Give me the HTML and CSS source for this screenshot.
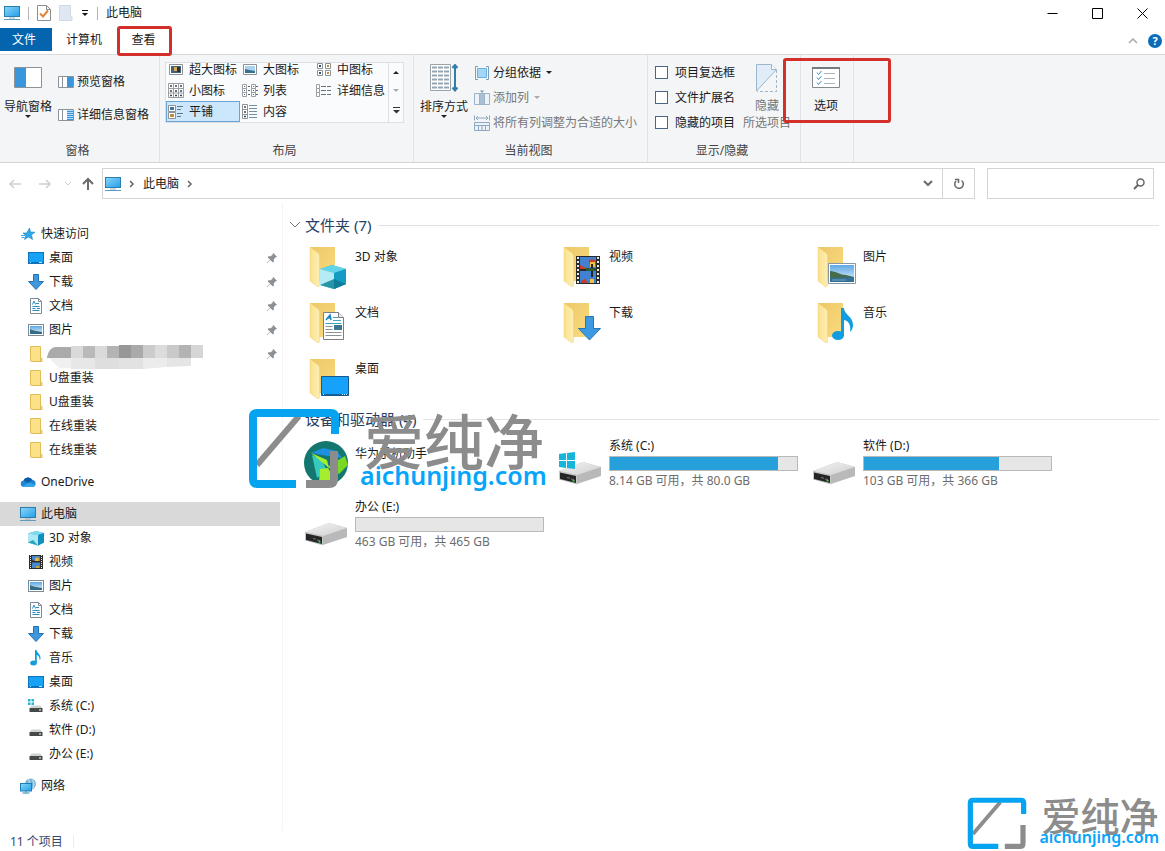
FILE: index.html
```html
<!DOCTYPE html>
<html lang="zh-CN">
<head>
    <meta charset="UTF-8">
    <meta name="viewport" content="width=device-width, initial-scale=1.0">
    <title>此电脑</title>
    <link rel="stylesheet" href="styles.css">
</head>
<body>
    <!-- shared icons -->
    <svg class="sprite" aria-hidden="true">
        <defs>
            <linearGradient id="g-screen" x1="0" y1="0" x2="1" y2="1">
                <stop offset="0" stop-color="#8bd6fb"/><stop offset="1" stop-color="#219fe6"/>
            </linearGradient>
            <linearGradient id="g-flap" x1="0" y1="0" x2="1" y2="0">
                <stop offset="0" stop-color="#fbe18c"/><stop offset="1" stop-color="#fdeeb4"/>
            </linearGradient>
            <linearGradient id="g-back" x1="0" y1="0" x2="1" y2="1">
                <stop offset="0" stop-color="#ecc766"/><stop offset="1" stop-color="#fbdc80"/>
            </linearGradient>
            <linearGradient id="g-sky" x1="0" y1="0" x2="0" y2="1">
                <stop offset="0" stop-color="#5fa8e6"/><stop offset="1" stop-color="#e4f2fb"/>
            </linearGradient>
            <linearGradient id="g-drive" x1="0" y1="0" x2="1" y2="1">
                <stop offset="0" stop-color="#f4f4f4"/><stop offset="1" stop-color="#cfcfcf"/>
            </linearGradient>
        </defs>
        <symbol id="pc" viewBox="0 0 16 16">
            <rect x="0.5" y="1.5" width="15" height="10" fill="url(#g-screen)" stroke="#2b7dad"/>
            <path d="M5 13h6" stroke="#9bb4c2"/><path d="M0 14.5h16" stroke="#5b9cc0"/>
        </symbol>
        <symbol id="star" viewBox="0 0 16 16">
            <path d="M9.500 2l1 4 4.500.2-3.500 2.600 1 4.700L8.500 11 4.500 13.500l1.300-4L3 7h3.700z" fill="#2fa8e8" stroke="#1583c4" stroke-width=".6"/>
            <path d="M1 9.500h4M1.500 11.500h3" stroke="#2fa8e8"/>
        </symbol>
        <symbol id="desk" viewBox="0 0 16 16">
            <rect x="0.500" y="2.500" width="15" height="11" fill="#17a3f5" stroke="#1173b8"/>
            <path d="M1 12.500h14" stroke="#0b6fb5"/><path d="M2 12.500h1M11 12.500h3" stroke="#bfe5ff"/>
        </symbol>
        <symbol id="down" viewBox="0 0 16 16">
            <path d="M5.500.5h5v7h5L8 15.500.5 7.500h5z" fill="#3f98db" stroke="#2371b3"/>
        </symbol>
        <symbol id="doc" viewBox="0 0 16 16">
            <path d="M2.500.5h8l3 3v12h-11z" fill="#fff" stroke="#7d8a92"/><path d="M10.500.5v3h3" fill="none" stroke="#7d8a92"/>
            <path d="M4.500 6.500l1.500-3.500 1.500 3.500M8 5.500h3M4.500 8.500h7M4.500 10.500h3M9 10.500h3M4.500 12.500h7" fill="none" stroke="#2c8fc4"/>
        </symbol>
        <symbol id="pic" viewBox="0 0 16 16">
            <rect x="0.500" y="2.500" width="15" height="11" fill="#fff" stroke="#7b8a94"/>
            <rect x="2" y="4" width="12" height="8" fill="url(#g-sky)"/>
            <path d="M2 7l4 1.500 8 1.500v2H2z" fill="#3d6f7c"/><path d="M2 10.500h12V12H2z" fill="#2b6a94"/>
        </symbol>
        <symbol id="film" viewBox="0 0 16 16">
            <rect x="1" y="1" width="14" height="14" fill="#2c2c2c"/>
            <path d="M2.500 1v14M13.500 1v14" stroke="#e8e8e8" stroke-dasharray="1 1"/>
            <rect x="4" y="2" width="8" height="5" fill="#4787cb"/><rect x="4" y="8.500" width="8" height="5.500" fill="#4787cb"/>
            <path d="M7 7V4.500L9 3l2 1.500V7z" fill="#e2b33c"/><path d="M8 12h3v2H8z" fill="#c9a63c"/><path d="M4 5.500l3 1.500H4z" fill="#4d3b2c"/>
        </symbol>
        <symbol id="cube" viewBox="0 0 16 16">
            <path d="M0 3.500L8 1l8 2v9.500l-6 3L0 12.500z" fill="#35b4da"/>
            <path d="M0 3.500L8 1l8 2-6 2z" fill="#7fdcf0"/><path d="M0 3.500L10 5v10.500L0 12.500z" fill="#ace8f5"/>
            <path d="M10 5l6-2v9.500l-6 3z" fill="#1090bd"/><path d="M0 12.500L5 10l5 5.500z" fill="#2aa5b8"/>
        </symbol>
        <symbol id="note" viewBox="0 0 16 16">
            <ellipse cx="5.500" cy="13" rx="3.300" ry="2.500" fill="#139bdc"/>
            <path d="M7 0h1.500c.3 3 4.500 4 4 9l-.8 1c-.2-3-1.200-4.500-2.900-5v8H7z" fill="#139bdc"/>
        </symbol>
        <symbol id="folder" viewBox="0 0 16 16">
            <path d="M2.500.5h10v11l1.500 1v3H3l-.5-.5z" fill="#fbe187" stroke="#e2bd57"/><path d="M12.500 11v4" stroke="#e2bd57"/>
        </symbol>
        <symbol id="cloud" viewBox="0 0 16 16">
            <path d="M3.500 13a3.300 3.300 0 0 1 0-6.500A5 5 0 0 1 12.500 6 3.600 3.600 0 0 1 13 13z" fill="#1d84d0"/>
            <path d="M3.500 6.500A5 5 0 0 1 12.500 6L8 9z" fill="#0b5da8"/><path d="M2 12.500L9 8.500l6.500 2.500A3.300 3.300 0 0 1 13 13H3.500z" fill="#33a6ea"/>
        </symbol>
        <symbol id="disk" viewBox="0 0 16 16">
            <path d="M3.500 7.500h9l2 3h-13z" fill="#d0d2d2"/><rect x="1.500" y="10" width="13" height="4" fill="#46494a"/>
            <rect x="11" y="11.500" width="2" height="1" fill="#fff"/>
        </symbol>
        <symbol id="sysdisk" viewBox="0 0 16 16">
            <use href="#disk" width="16" height="16"/>
            <path d="M0 1h2.500v2.500H0zM3.500 1H6v2.500H3.500zM0 4.500h2.500V7H0zM3.500 4.500H6V7H3.500z" fill="#26b1d8"/>
        </symbol>
        <symbol id="net" viewBox="0 0 16 16">
            <circle cx="10.500" cy="6" r="5.500" fill="#7bb5d5"/><path d="M8 1.500c2 1 2 3 0 4.500M12 2c3 3 2 5 1 8" stroke="#d1eaf5" fill="none"/>
            <rect x=".5" y="5.500" width="11" height="7.500" fill="url(#g-screen)" stroke="#1c80b6"/><path d="M6 13v1.500M2.500 15h7" stroke="#2783b5"/>
        </symbol>
        <symbol id="pin" viewBox="0 0 12 12">
            <path d="M7 .8L11.200 5l-1.500.3-1.900 2 .1 2.200-1 1L4.300 8 1 11.300.6 11 4 7.600 1.500 5.200l1-1 2.200.1 2-1.900z" fill="#8b9197"/>
        </symbol>
        <symbol id="bigfolder" viewBox="0 0 48 48">
            <path d="M5 4h25v34H14z" fill="url(#g-back)"/>
            <path d="M5 4l8 6c1 1 1.500 2 1.500 3v30L13 44 5 38z" fill="url(#g-flap)" stroke="#f0cf74" stroke-width=".5"/>
        </symbol>
        <symbol id="drive" viewBox="0 0 48 48">
            <path d="M0 30l24-9 18 5v9l-24 8L0 38z" fill="#b9b9b9"/>
            <path d="M0 30l24-9 18 5-24 8z" fill="url(#g-drive)"/>
            <path d="M0 30l18 4v9.500L0 38.500z" fill="#c8c8c8"/>
            <path d="M1 31.500l16 3.500v7L1 38z" fill="#262626"/>
            <path d="M8 36.500l3 .7M12 38l3 .7" stroke="#777"/><path d="M13.500 39.500l2 .5" stroke="#3fd65a" stroke-width="1.500"/>
        </symbol>
        <symbol id="logo" viewBox="0 0 92 80">
            <path d="M9 57L51 8" stroke="#8c8c8c" stroke-width="6"/>
            <path d="M87 26V9q0-4-4-4H9Q5 5 5 9v62q0 5 4 5h39" fill="none" stroke="#06a4f0" stroke-width="8"/>
            <path d="M86 43v28q0 5-5 5H58" fill="none" stroke="#8c8c8c" stroke-width="8"/>
        </symbol>
        <symbol id="chev" viewBox="0 0 10 10"><path d="M3 2l3 3-3 3" fill="none" stroke="#666" stroke-width="1.500"/></symbol>
    </svg>

    <header class="titlebar">
        <svg class="icon"><use href="#pc"/></svg>
        <span class="sep"></span>
        <button class="quick" aria-label="属性"><svg width="14" height="16"><path d="M.5.5h9l4 4v11H.5z" fill="#fff" stroke="#8d8d8d"/><path d="M9.500.5v4h4" fill="none" stroke="#8d8d8d"/><path d="M3 8.500l3 3 5-6" fill="none" stroke="#e08437" stroke-width="2"/></svg></button>
        <button class="quick" aria-label="新建文件夹"><svg width="14" height="16"><path d="M.5.5h11v10l1.500 1v4H.5z" fill="#dfe7f3" stroke="#d0d9e8"/></svg></button>
        <button class="quick" aria-label="自定义快速访问工具栏"><svg width="8" height="8"><path d="M1 1.500h6" stroke="#111"/><path d="M1 4h6L4 7z" fill="#111"/></svg></button>
        <span class="sep"></span>
        <h1>此电脑</h1>
        <div class="window-buttons">
            <button aria-label="最小化"><svg width="11" height="11"><path d="M.5 5.500h10" stroke="#000"/></svg></button>
            <button aria-label="最大化"><svg width="11" height="11"><path d="M.5.5h10v10H.5z" fill="none" stroke="#000"/></svg></button>
            <button aria-label="关闭"><svg width="11" height="11"><path d="M.5.5l10 10M10.500.5l-10 10" stroke="#000"/></svg></button>
        </div>
    </header>

    <nav class="tabs">
        <button class="tab tab-file">文件</button>
        <button class="tab">计算机</button>
        <button class="tab tab-view marked">查看</button>
        <div class="tabs-end">
            <button aria-label="折叠功能区"><svg width="10" height="8"><path d="M1 6l4-4 4 4" fill="none" stroke="#a8a8a8" stroke-width="1.500"/></svg></button>
            <button class="help" aria-label="帮助">?</button>
        </div>
    </nav>

    <section class="ribbon">
        <div class="group group-panes">
            <div class="group-body">
                <button class="big">
                    <svg width="28" height="22"><path d="M.5.5h27v20H.5z" fill="#fff" stroke="#8b9298"/><path d="M1 1h11v19H1z" fill="#3a96dc"/></svg>
                    <span>导航窗格</span>
                    <svg class="caret"><path d="M0 0h6L3 3z"/></svg>
                </button>
                <div class="pane-list">
                    <button class="small"><svg width="16" height="12"><path d="M.5.5h15v11H.5zM4.500 0v12" fill="#fff" stroke="#8b9298"/><path d="M9 1h6v10H9z" fill="#3a96dc"/></svg>预览窗格</button>
                    <button class="small"><svg width="16" height="12"><path d="M.5.5h15v11H.5zM4.500 0v12" fill="#fff" stroke="#8b9298"/><path d="M9 1h6v10H9z" fill="#b5dcf6"/><path d="M9 2.500h6M9 4.500h6M9 6.500h6M9 8.500h6M9 10.500h6" stroke="#3a96dc"/></svg>详细信息窗格</button>
                </div>
            </div>
            <div class="group-name">窗格</div>
        </div>

        <div class="group group-layout">
            <div class="group-body">
                <div class="gallery">
                    <div class="gallery-items">
                        <button><svg class="icon"><path d="M1.500 2.500h13v10h-13z" fill="#fff" stroke="#8b9298"/><path d="M3 4h10v7H3z" fill="#46617a"/><path d="M6 5h3v4H6z" fill="#d9a94a"/><path d="M9 5h3v5H9z" fill="#2e3133"/></svg>超大图标</button>
                        <button><svg class="icon"><path d="M1.500 2.500h13v10h-13z" fill="#fff" stroke="#8b9298"/><path d="M3 4h10v7H3z" fill="#a9d2ee"/><path d="M3 7l4 1 6 1v2H3z" fill="#37708d"/></svg>大图标</button>
                        <button><svg class="icon"><path d="M1.500 1.500h5v5h-5zM9.500 1.500h5v5h-5zM1.500 8.500h5v5h-5zM9.500 8.500h5v5h-5z" fill="#fff" stroke="#8b9298"/><path d="M3 3h2v2H3zM3 10h2v2H3z" fill="#3b5163"/><path d="M11 3h2v2h-2zM11 10h2v2h-2z" fill="#c48a2c"/></svg>中图标</button>
                        <button><svg class="icon"><path d="M.5.5h15v14H.5zM5.500.5v14M10.500.5v14M.5 5.500h15M.5 10h15" fill="#fff" stroke="#9a9fa3"/><path d="M2 3h2M7 3h2M12 3h2M2 8h2M7 8h2M12 8h2M2 12.500h2M7 12.500h2M12 12.500h2" stroke="#39434c" stroke-width="1.500"/></svg>小图标</button>
                        <button><svg class="icon"><path d="M.5 1.500h4v4h-4zM.5 5.500h4v4h-4zM.5 9.500h4v4h-4zM9.500 1.500h4v4h-4zM9.500 5.500h4v4h-4zM9.500 9.500h4v4h-4z" fill="#fff" stroke="#9a9fa3"/><path d="M2 3.500h1M2 7.500h1M2 11.500h1M6 3.500h2M6 7.500h2M6 11.500h2M11 3.500h1M11 7.500h1M11 11.500h1M14 3.500h2M14 7.500h2M14 11.500h2" stroke="#5a6874"/></svg>列表</button>
                        <button><svg class="icon"><path d="M.5 1.500h3v4h-3zM.5 5.500h3v4h-3zM.5 9.500h3v4h-3z" fill="#fff" stroke="#9a9fa3"/><path d="M5 3.500h5M5 7.500h5M5 11.500h5M11 3.500h4M11 7.500h4M11 11.500h4" stroke="#66727c"/></svg>详细信息</button>
                        <button class="selected"><svg class="icon"><path d="M.5 1.500h7v6h-7zM.5 8.500h7v6h-7z" fill="#fff" stroke="#8b9298"/><path d="M2 3h4v3H2z" fill="#427699"/><path d="M2 10h4v3H2z" fill="#bb8d3c"/><path d="M9 2.500h6M9 5.500h4M9 9.500h6M9 12.500h4" stroke="#5f7788"/></svg>平铺</button>
                        <button><svg class="icon"><path d="M.5.5h5v5h-5zM.5 5.500h5v5h-5zM.5 10.500h5v4h-5z" fill="#fff" stroke="#8b9298"/><path d="M2 3h2M2 8h2M2 12.500h2" stroke="#3f4c56" stroke-width="1.500"/><path d="M7 1.500h8M7 4.500h8M7 7.500h8M7 10.500h8M7 13.500h8" stroke="#7390a5"/></svg>内容</button>
                    </div>
                    <div class="gallery-scroll">
                        <button aria-label="向上"><svg class="caret"><path d="M0 3h6L3 0z"/></svg></button>
                        <button class="dim" aria-label="向下"><svg class="caret"><path d="M0 0h6L3 3z"/></svg></button>
                        <button aria-label="更多"><svg width="7" height="7"><path d="M0 .5h7" stroke="#333"/><path d="M0 3h7L3.500 6.500z" fill="#333"/></svg></button>
                    </div>
                </div>
            </div>
            <div class="group-name">布局</div>
        </div>

        <div class="group group-current">
            <div class="group-body">
                <button class="big">
                    <svg width="28" height="28"><path d="M.5.5h20v26H.5z" fill="#fff" stroke="#9aa3aa"/><path d="M2 3.500h17M2 7.500h17M2 11.500h17M2 15.500h17M2 19.500h17M2 23.500h17" stroke="#93a5b3" stroke-width="2" stroke-dasharray="5 1"/><path d="M25 2v23M22.500 4L25 1l2.500 3M22.500 23.500L25 26.500l2.500-3" fill="none" stroke="#2e7ea8" stroke-width="2"/></svg>
                    <span>排序方式</span>
                    <svg class="caret"><path d="M0 0h6L3 3z"/></svg>
                </button>
                <div class="action-list">
                    <button class="small"><svg width="16" height="14"><path d="M4 .5H1.500v13H4M12 .5h2.500v13H12" fill="none" stroke="#7aa0b8"/><path d="M3.500 2.500h9v9h-9z" fill="#a4d6f7" stroke="#6bb1e0"/></svg>分组依据<svg class="caret"><path d="M0 0h6L3 3z"/></svg></button>
                    <button class="small dim"><svg width="16" height="16"><path d="M.5 3.500h15v11H.5zM5.500 3.500v11M10.500 3.500v11" fill="#edf2f7" stroke="#9db3c8"/><path d="M6 4h4v10H6z" fill="#a8bfd6"/><path d="M6 .5h4L8 3z" fill="#7d9ab5"/></svg>添加列<svg class="caret"><path d="M0 0h6L3 3z"/></svg></button>
                    <button class="small dim"><svg width="16" height="16"><path d="M.5.5v5M15.500.5v5M2 3h12M4 1L2 3l2 2M12 1l2 2-2 2" fill="none" stroke="#8ea9c2"/><path d="M.5 7.500h15v8H.5zM.5 10.500h15M4.500 10.500v5M8 10.500v5M11.500 10.500v5" fill="#edf2f7" stroke="#8ea9c2"/></svg>将所有列调整为合适的大小</button>
                </div>
            </div>
            <div class="group-name">当前视图</div>
        </div>

        <div class="group group-show">
            <div class="group-body">
                <div class="check-list">
                    <label><input type="checkbox">项目复选框</label>
                    <label><input type="checkbox">文件扩展名</label>
                    <label><input type="checkbox">隐藏的项目</label>
                </div>
                <button class="big dim">
                    <svg width="22" height="28"><path d="M.5 27V.5h15l5 5L.5 27" fill="#e0edf9" stroke="#9cb6cd"/><path d="M15.500.5v5h5" fill="#fff" stroke="#9cb6cd"/><path d="M20.500 6v21.500H1" fill="none" stroke="#9cb6cd" stroke-dasharray="3 2"/></svg>
                    <span>隐藏<br>所选项目</span>
                </button>
            </div>
            <div class="group-name">显示/隐藏</div>
        </div>

        <div class="group group-options">
            <div class="group-body">
                <button class="big">
                    <svg width="28" height="22"><path d="M.5.5h27v20H.5z" fill="#fff" stroke="#838b91"/><path d="M0 1h28" stroke="#737b81" stroke-width="2"/><path d="M5 5.500l1.500 2L9.500 4M5 10.500l1.500 2L9.500 9M5 15.500l1.500 2L9.500 14" fill="none" stroke="#3b8cc0"/><path d="M12 6.500h11M12 11.500h11M12 16.500h11" stroke="#aeb5ba"/></svg>
                    <span>选项</span>
                </button>
            </div>
        </div>
    </section>

    <div class="address-row">
        <div class="nav-buttons">
            <button aria-label="后退"><svg width="14" height="12"><path d="M13 6H2M6 2L2 6l4 4" fill="none" stroke="#cfcfcf" stroke-width="1.500"/></svg></button>
            <button aria-label="前进"><svg width="14" height="12"><path d="M1 6h11M8 2l4 4-4 4" fill="none" stroke="#cfcfcf" stroke-width="1.500"/></svg></button>
            <button class="recent" aria-label="最近浏览的位置"><svg width="8" height="6"><path d="M1 1l3 3 3-3" fill="none" stroke="#cfcfcf"/></svg></button>
            <button class="up" aria-label="上移"><svg width="12" height="14"><path d="M6 13V2M1 7l5-5 5 5" fill="none" stroke="#6b6b6b" stroke-width="2"/></svg></button>
        </div>
        <div class="address">
            <svg class="icon"><use href="#pc"/></svg>
            <svg class="crumb"><use href="#chev"/></svg>
            <a href="#">此电脑</a>
            <svg class="crumb"><use href="#chev"/></svg>
            <button class="history" aria-label="以前的位置"><svg width="10" height="7"><path d="M1 1l4 4 4-4" fill="none" stroke="#6b6b6b" stroke-width="2"/></svg></button>
            <button class="refresh" aria-label="刷新"><svg width="12" height="12"><path d="M8.500 2.500A4.300 4.300 0 1 1 3 3" fill="none" stroke="#666" stroke-width="1.500"/><path d="M2 1.500h3.500V5" fill="none" stroke="#666" stroke-width="1.500"/></svg></button>
        </div>
        <label class="search">
            <input type="text" aria-label="搜索">
            <svg width="12" height="12"><circle cx="7.500" cy="4.500" r="3.500" fill="none" stroke="#666" stroke-width="1.500"/><path d="M5 7l-4 4" stroke="#666" stroke-width="2"/></svg>
        </label>
    </div>

    <div class="body">
        <aside class="sidebar">
            <ul>
                <li><svg class="icon"><use href="#star"/></svg>快速访问</li>
                <li class="child"><svg class="icon"><use href="#desk"/></svg>桌面<svg class="pin"><use href="#pin"/></svg></li>
                <li class="child"><svg class="icon"><use href="#down"/></svg>下载<svg class="pin"><use href="#pin"/></svg></li>
                <li class="child"><svg class="icon"><use href="#doc"/></svg>文档<svg class="pin"><use href="#pin"/></svg></li>
                <li class="child"><svg class="icon"><use href="#pic"/></svg>图片<svg class="pin"><use href="#pin"/></svg></li>
                <li class="child"><svg class="icon"><use href="#folder"/></svg>
                    <svg class="mosaic" viewBox="0 0 156 24">
                        <path d="M0 12q2-9 8-10h16v11H0z" fill="#aaa"/><path d="M24 1h12v12H24z" fill="#d9d9d9"/><path d="M36 1h12v12H36z" fill="#b9b9b9"/>
                        <path d="M48 1h12v12H48z" fill="#dadada"/><path d="M60 1h12v12H60z" fill="#b4b4b4"/><path d="M72 0h12v13H72z" fill="#979797"/>
                        <path d="M84 0h12v13H84z" fill="#aaa"/><path d="M96 0h12v13H96z" fill="#ccc"/><path d="M108 0h12v13h-12z" fill="#dcdcdc"/>
                        <path d="M120 0h12v13h-12z" fill="#c9c9c9"/><path d="M132 0h12v13h-12z" fill="#b3b3b3"/><path d="M144 0h12v13h-12z" fill="#d6d6d6"/>
                        <path d="M2 13h22v10H12z" fill="#f0f0f0"/><path d="M24 13h24v11H24z" fill="#e7e7e7"/><path d="M48 13h24v11H48z" fill="#dedede"/>
                        <path d="M72 13h24v11H72z" fill="#e2e2e2"/><path d="M96 13h24v9l-24 2z" fill="#ececec"/><path d="M120 13h24v8l-24 1z" fill="#e5e5e5"/>
                    </svg>
                    <svg class="pin"><use href="#pin"/></svg></li>
                <li class="child"><svg class="icon"><use href="#folder"/></svg>U盘重装</li>
                <li class="child"><svg class="icon"><use href="#folder"/></svg>U盘重装</li>
                <li class="child"><svg class="icon"><use href="#folder"/></svg>在线重装</li>
                <li class="child"><svg class="icon"><use href="#folder"/></svg>在线重装</li>
            </ul>
            <ul>
                <li><svg class="icon"><use href="#cloud"/></svg>OneDrive</li>
            </ul>
            <ul>
                <li class="current"><svg class="icon"><use href="#pc"/></svg>此电脑</li>
                <li class="child"><svg class="icon"><use href="#cube"/></svg>3D 对象</li>
                <li class="child"><svg class="icon"><use href="#film"/></svg>视频</li>
                <li class="child"><svg class="icon"><use href="#pic"/></svg>图片</li>
                <li class="child"><svg class="icon"><use href="#doc"/></svg>文档</li>
                <li class="child"><svg class="icon"><use href="#down"/></svg>下载</li>
                <li class="child"><svg class="icon"><use href="#note"/></svg>音乐</li>
                <li class="child"><svg class="icon"><use href="#desk"/></svg>桌面</li>
                <li class="child"><svg class="icon"><use href="#sysdisk"/></svg>系统 (C:)</li>
                <li class="child"><svg class="icon"><use href="#disk"/></svg>软件 (D:)</li>
                <li class="child"><svg class="icon"><use href="#disk"/></svg>办公 (E:)</li>
            </ul>
            <ul>
                <li><svg class="icon"><use href="#net"/></svg>网络</li>
            </ul>
        </aside>

        <main class="content">
            <h2><svg width="12" height="8"><path d="M1 1l5 5 5-5" fill="none" stroke="#777"/></svg>文件夹 (7)</h2>
            <div class="tiles folders">
                <div class="tile">
                    <svg class="big-icon"><use href="#bigfolder"/><path d="M15 26l12-4 14 4v15l-12 5-14-4z" fill="#39b9dc"/><path d="M15 26l12-4 14 4-12 4z" fill="#63d3e8"/><path d="M15 26l14 4v16l-14-4z" fill="#b4ebf5"/><path d="M29 30l12-4v15l-12 5z" fill="#149cc4"/><path d="M15 42l14-6v10z" fill="#2795a8"/><path d="M29 36l12 5-12 5z" fill="#0f7c99"/></svg>
                    <span>3D 对象</span>
                </div>
                <div class="tile">
                    <svg class="big-icon"><use href="#bigfolder"/><path d="M17 13h24v28H17z" fill="#2a2a2a"/><path d="M19 14v26M39 14v26" stroke="#ececec" stroke-width="2" stroke-dasharray="2 2"/><path d="M21 14h16v12H21zM21 28h16v12H21z" fill="#4280d0"/><path d="M30 17l3-1 4 2v3h-7z" fill="#c83c2a"/><path d="M31 19h5v5h-5z" fill="#efc33e"/><path d="M32 21h2v13h-2z" fill="#252525"/><path d="M27 25h10v3H27z" fill="#2c5b32"/><path d="M21 22l6 3v1h-6zM22 38l4-2 3 4h-7z" fill="#c83c2a"/><path d="M31 36h4v4h-4z" fill="#efc33e"/></svg>
                    <span>视频</span>
                </div>
                <div class="tile">
                    <svg class="big-icon"><use href="#bigfolder"/><path d="M15.500 20.500h27v20h-27z" fill="#fff" stroke="#8797a3"/><path d="M17 22h24v17H17z" fill="url(#g-sky)"/><path d="M17 28c6 0 10 4 16 4l8 2v2H17z" fill="#466d4b"/><path d="M17 35l24-1v5H17z" fill="#336f97"/><path d="M19 37h14" stroke="#79a8c4"/></svg>
                    <span>图片</span>
                </div>
                <div class="tile">
                    <svg class="big-icon"><use href="#bigfolder"/><path d="M18.500 13.500h15l5 5v22h-20z" fill="#fff" stroke="#7b7f82"/><path d="M33.500 13.500v5h5" fill="#eee" stroke="#7b7f82"/><path d="M21 21l4-5 1 5M22 19h4" fill="none" stroke="#1c84bd" stroke-width="1.500"/><path d="M28 18.500h5M28 21.500h8M20.500 24.500h16" stroke="#44a2c4"/><path d="M29 26h8v5h-8z" fill="#3a7790"/><path d="M20.500 27.500h7M20.500 30.500h7M20.500 33.500h16M20.500 36.500h16" stroke="#8c9398"/></svg>
                    <span>文档</span>
                </div>
                <div class="tile">
                    <svg class="big-icon"><use href="#bigfolder"/><path d="M26.500 17.500h8v12h7L30.500 41 19.500 29.500h7z" fill="#3d99e0" stroke="#2777b8"/></svg>
                    <span>下载</span>
                </div>
                <div class="tile">
                    <svg class="big-icon"><use href="#bigfolder"/><ellipse cx="25" cy="36.500" rx="6" ry="4.500" fill="#0f9ce0"/><path d="M28 9h3c0 7 9 8 9 17 0 3-1 5-3 7 1-7-1-11-6-12v16h-3z" fill="#0f9ce0"/></svg>
                    <span>音乐</span>
                </div>
                <div class="tile">
                    <svg class="big-icon"><use href="#bigfolder"/><path d="M16.500 21.500h27v19h-27z" fill="#16a1fa" stroke="#17598a"/><path d="M17 39.500h26" stroke="#0e62a0"/><path d="M18 39.500h2M37 39.500h5" stroke="#d2ecff" stroke-dasharray="1 1"/></svg>
                    <span>桌面</span>
                </div>
            </div>

            <h2 class="second">设备和驱动器 (4)</h2>
            <div class="tiles drives">
                <div class="tile app">
                    <svg class="big-icon"><circle cx="21" cy="22" r="22" fill="#14776f"/><path d="M6 12l12-5 14 3 5 7-14-2z" fill="#1d90df"/><path d="M7 14l10 5 5 11-10 7z" fill="#36c9bd"/><path d="M6 12l16 7 2 8zM14 42l1-14 8-1 8 14-9 3z" fill="#a5ee2f"/><path d="M22 26l18-11 3 9-9 9z" fill="#79d922"/></svg>
                    <span>华为手机助手</span>
                </div>
                <div class="tile">
                    <svg class="big-icon"><use href="#drive"/><path d="M0 13l7-1v7H0zM8 12l8-1v8H8zM0 20h7v7l-7-1zM8 20h8v8l-8-1z" fill="#17b4dc"/></svg>
                    <div class="drive-info"><span>系统 (C:)</span><div class="bar"><div style="width: 90%"></div></div><small>8.14 GB 可用，共 80.0 GB</small></div>
                </div>
                <div class="tile">
                    <svg class="big-icon"><use href="#drive"/></svg>
                    <div class="drive-info"><span>软件 (D:)</span><div class="bar"><div style="width: 72%"></div></div><small>103 GB 可用，共 366 GB</small></div>
                </div>
                <div class="tile">
                    <svg class="big-icon"><use href="#drive"/></svg>
                    <div class="drive-info"><span>办公 (E:)</span><div class="bar"><div style="width: 0%"></div></div><small>463 GB 可用，共 465 GB</small></div>
                </div>
            </div>
        </main>
    </div>

    <footer class="status">11 个项目<span class="sep"></span></footer>

    <div class="brand brand-center">
        <svg><use href="#logo"/></svg>
        <div><b>爱纯净</b><i>aichunjing.com</i></div>
    </div>
    <div class="brand brand-corner">
        <svg><use href="#logo"/></svg>
        <div><b>爱纯净</b><i>aichunjing.com</i></div>
    </div>
</body>
</html>
```

FILE: styles.css
```css
* {
    box-sizing: border-box;
}
body {
    margin: 0;
    min-height: 100vh;
    display: flex;
    flex-direction: column;
    position: relative;
    background: #fff;
    color: #1a1a1a;
    font-family: "Noto Sans", "Noto Sans CJK SC", sans-serif;
    font-size: 12px;
    line-height: 20px;
}
button {
    padding: 0;
    border: none;
    background: none;
    color: inherit;
    font: inherit;
    white-space: nowrap;
}
svg {
    display: block;
    flex: none;
}
.sprite {
    width: 0;
    height: 0;
    position: absolute;
}
.icon {
    width: 16px;
    height: 16px;
}
.caret {
    width: 6px;
    height: 3px;
    fill: #222;
}
.dim {
    color: #777;
}
.dim .caret {
    fill: #aaa;
}
.sep {
    width: 1px;
    height: 13px;
    background: #b5b5b5;
}

/* title bar */
.titlebar {
    height: 28px;
    padding: 0 0 2px 4px;
    display: flex;
    align-items: center;
    gap: 8px;
}
.titlebar h1 {
    margin: 0;
    font-size: 12px;
    font-weight: 400;
}
.window-buttons {
    margin-left: auto;
    display: flex;
}
.window-buttons button {
    width: 45px;
    height: 24px;
    display: flex;
    align-items: center;
    justify-content: center;
}

/* tabs */
.tabs {
    height: 27px;
    display: flex;
    border-bottom: 1px solid #d9dadb;
}
.tab {
    width: 64px;
    height: 23px;
    line-height: 24px;
}
.tab-file {
    width: 52px;
    padding-right: 4px;
    background: #0464ad;
    color: #fff;
}
.tab-view {
    width: 55px;
    padding-right: 2px;
}
.marked {
    position: relative;
    margin-left: 1px;
}
.marked::after,
.group-options .big::after {
    content: "";
    position: absolute;
    border: 3px solid #d3302b;
    border-radius: 3px;
}
.marked::after {
    inset: -2px 0 -5px 0;
}
.tabs-end {
    margin-left: auto;
    padding-right: 3px;
    display: flex;
    align-items: center;
    gap: 10px;
}
.help {
    width: 14px;
    height: 14px;
    border-radius: 50%;
    background: #0c6cb8;
    color: #fff;
    font-size: 11px;
    font-weight: 700;
    line-height: 14px;
}

/* ribbon */
.ribbon {
    height: 108px;
    display: flex;
    background: #f4f5f7;
    border-bottom: 1px solid #d5d6d8;
}
.group {
    display: flex;
    flex-direction: column;
    border-right: 1px solid #e1e3e5;
}
.group-body {
    flex: 1;
    display: flex;
}
.group-name {
    height: 24px;
    line-height: 26px;
    padding-right: 4px;
    text-align: center;
    color: #444;
}
.big {
    padding-top: 9px;
    display: flex;
    flex-direction: column;
    align-items: center;
}
.big span {
    margin-top: auto;
    line-height: 17px;
}
.big .caret {
    margin-bottom: 20px;
}
.small {
    height: 25px;
    display: flex;
    align-items: center;
    gap: 3px;
}
.small .caret {
    margin-left: 2px;
}
.group-panes {
    width: 160px;
}
.group-panes .group-body {
    padding-left: 4px;
    gap: 6px;
}
.group-panes .big {
    padding-top: 12px;
}
.pane-list {
    padding-top: 14px;
    display: flex;
    flex-direction: column;
    gap: 8px;
}
.group-layout {
    width: 254px;
}
.group-layout .group-body {
    padding: 7px 0 0 5px;
}
.gallery {
    height: 61px;
    display: flex;
    border: 1px solid #dcdfe3;
    background: #fafbfd;
}
.gallery-items {
    display: grid;
    grid-template-columns: 74px 74px 74px;
    grid-template-rows: 17px 21px 21px;
    align-items: end;
}
.gallery-items button {
    height: 21px;
    padding-left: 1px;
    display: flex;
    align-items: center;
    gap: 5px;
    border: 1px solid transparent;
}
.gallery-items .selected {
    background: #cce6fb;
    border-color: #6ba4d4;
}
.gallery-scroll {
    width: 15px;
    display: grid;
    border-left: 1px solid #dcdfe3;
}
.gallery-scroll button {
    display: flex;
    align-items: center;
    justify-content: center;
}
.group-current {
    width: 234px;
}
.group-current .group-body {
    padding-left: 6px;
    gap: 6px;
}
.action-list,
.check-list {
    padding-top: 5px;
}
.group-show {
    width: 153px;
}
.group-show .group-body {
    padding-left: 7px;
    gap: 8px;
}
.check-list label {
    height: 25px;
    display: flex;
    align-items: center;
    gap: 7px;
    white-space: nowrap;
}
.check-list input {
    appearance: none;
    width: 13px;
    height: 13px;
    margin: 0;
    border: 1px solid #4b6684;
    background: #fff;
}
.group-show .big {
    padding-bottom: 7px;
}
.group-options {
    width: 53px;
}
.group-options .big {
    position: relative;
    align-self: flex-start;
    width: 50px;
    padding-top: 12px;
}
.group-options .big span {
    padding-top: 8px;
}
.group-options .big::after {
    inset: 3px -40px -9px -18px;
}

/* address row */
.address-row {
    height: 40px;
    padding: 5px 11px 4px 8px;
    display: flex;
    gap: 12px;
}
.nav-buttons {
    width: 82px;
    display: flex;
    align-items: center;
    gap: 16px;
}
.recent {
    margin: 0 -6px 0 -4px;
}
.address {
    flex: 1;
    padding-left: 2px;
    display: flex;
    align-items: center;
    gap: 6px;
    border: 1px solid #d4d4d4;
}
.crumb {
    width: 10px;
    height: 10px;
}
.address a {
    color: inherit;
    text-decoration: none;
}
.history {
    margin-left: auto;
    padding: 0 3px;
}
.refresh {
    width: 32px;
    height: 29px;
    display: flex;
    align-items: center;
    justify-content: center;
    border-left: 1px solid #d4d4d4;
}
.search {
    width: 167px;
    padding-right: 8px;
    display: flex;
    align-items: center;
    border: 1px solid #d4d4d4;
}
.search input {
    flex: 1;
    min-width: 0;
    height: 27px;
    border: none;
    outline: none;
    font: inherit;
}

/* body */
.body {
    flex: 1;
    display: flex;
}
.sidebar {
    width: 283px;
    padding: 19px 2px 0 0;
    border-right: 1px solid #f5f5f5;
}
.sidebar ul {
    margin: 0 0 8px;
    padding: 0;
    list-style: none;
}
.sidebar li {
    height: 24px;
    padding: 0 2px 0 20px;
    display: flex;
    align-items: center;
    gap: 5px;
}
.sidebar .child {
    padding-left: 28px;
}
.sidebar .current {
    background: #d9d9d9;
}
.pin {
    width: 12px;
    height: 12px;
    margin-left: auto;
}
.mosaic {
    width: 156px;
    height: 24px;
    align-self: flex-end;
    margin: 0 0 -3px -2px;
}
.content {
    flex: 1;
    padding: 12px 6px 0;
}
.content h2 {
    height: 20px;
    margin: 0 0 6px;
    display: flex;
    align-items: center;
    gap: 4px;
    color: #264066;
    font-size: 15px;
    font-weight: 400;
    line-height: 18px;
}
.content h2::after {
    content: "";
    flex: 1;
    height: 1px;
    margin-left: 3px;
    background: #dfe3e6;
}
.content .second {
    padding-left: 16px;
}
.tiles {
    padding-left: 16px;
    display: grid;
    grid-template-columns: repeat(auto-fill, 254px);
}
.tile {
    display: flex;
    gap: 2px;
}
.big-icon {
    width: 48px;
    height: 48px;
    overflow: visible;
}
.folders .tile {
    height: 56px;
    padding-top: 2px;
}
.folders span {
    padding-top: 4px;
}
.drives .tile {
    height: 61px;
}
.drives .big-icon {
    margin-top: 6px;
}
.app span {
    padding-top: 9px;
}
.drive-info {
    width: 189px;
    padding-top: 1px;
    display: flex;
    flex-direction: column;
}
.bar {
    height: 15px;
    border: 1px solid #b9b9b9;
    background: #e6e6e6;
}
.bar div {
    height: 100%;
    background: #26a0da;
}
.drive-info small {
    color: #6d6d6d;
    font-size: 12px;
}

/* status bar */
.status {
    height: 20px;
    padding: 1px 0 0 10px;
    display: flex;
    align-items: center;
    gap: 10px;
    color: #35476b;
}
.status .sep {
    background: #ececec;
}

/* brand marks that float above the window */
.brand {
    position: absolute;
    display: flex;
    pointer-events: none;
    white-space: nowrap;
}
.brand div {
    display: flex;
    flex-direction: column;
}
.brand b {
    color: #8c8c8c;
    font-weight: 500;
}
.brand i {
    color: #06a4fa;
    font-family: "Noto Sans", sans-serif;
    font-style: normal;
    font-weight: 600;
}
.brand-center {
    left: 248px;
    top: 408px;
    gap: 20px;
}
.brand-center svg {
    width: 92px;
    height: 80px;
}
.brand-center b {
    padding-left: 4px;
    font-size: 60px;
    line-height: 68px;
}
.brand-center i {
    margin-top: -16px;
    font-size: 25px;
    line-height: 30px;
}
.brand-corner {
    right: 6px;
    bottom: 2px;
    gap: 12px;
}
.brand-corner svg {
    width: 60px;
    height: 52px;
}
.brand-corner b {
    padding-left: 2px;
    font-size: 39px;
    line-height: 38px;
}
.brand-corner i {
    margin-top: -6px;
    font-size: 16px;
    line-height: 16px;
}
```
